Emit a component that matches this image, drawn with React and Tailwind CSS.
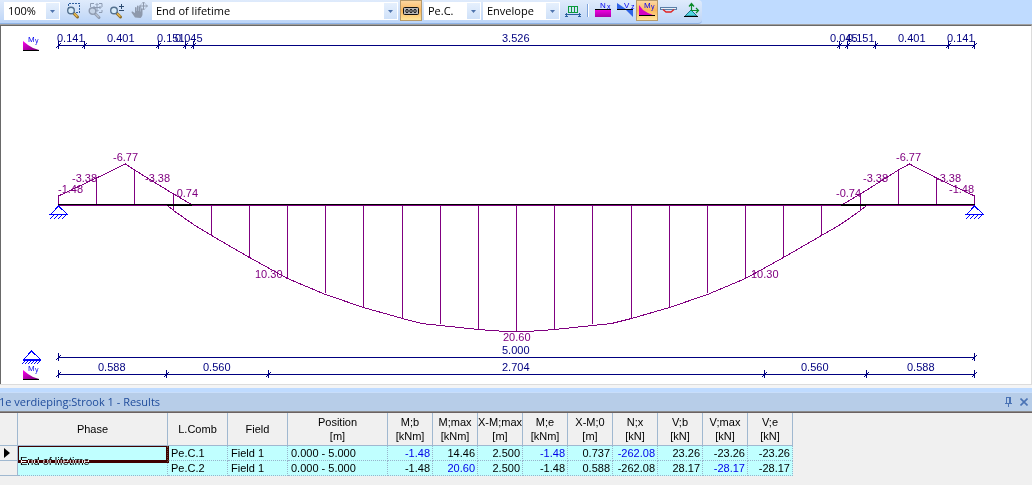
const UI = "font-['Open_Sans','Noto_Sans',sans-serif]";
const GRID = "font-['Liberation_Sans',Arial,sans-serif]";

const BEAM_Y = 205;

const TOP_DIMS = {
  y: 45,
  ticks: [58, 84, 158, 185, 193, 839, 847, 875, 948, 974],
  labels: [
    [57, '0.141'], [107, '0.401'], [157, '0.151'], [175, '0.045'], [502, '3.526'],
    [830, '0.045'], [847, '0.151'], [898, '0.401'], [947, '0.141'],
  ],
};
const TOTAL_DIM = { y: 357, ticks: [58, 974], labels: [[502, '5.000']] };
const BOTTOM_DIMS = {
  y: 374,
  ticks: [58, 166, 268, 764, 866, 974],
  labels: [[98, '0.588'], [203, '0.560'], [502, '2.704'], [801, '0.560'], [907, '0.588']],
};

const HOGGING = [
  '58,205 58,196 96,178 125,164 134,170 173,194 192,205',
  '974,205 974,196 936,178 909,164 898,170 860,194 841,205',
];

const SAGGING = [
  [167, 205], [173, 210], [193, 224], [211, 235], [249, 257], [287, 278], [325, 294],
  [363, 307], [402, 318], [421, 323], [440, 325], [478, 329], [505, 331], [527, 331],
  [554, 329], [592, 325], [611, 323], [631, 318], [669, 307], [707, 294], [745, 278],
  [783, 257], [821, 235], [840, 224], [860, 210], [866, 205],
];

const ORDINATES = [
  [96, 178, 205], [134, 170, 205], [173, 194, 210],
  [211, 205, 235], [249, 205, 257], [287, 205, 278], [325, 205, 293], [363, 205, 307],
  [402, 205, 318], [440, 205, 324], [478, 205, 329], [516, 205, 331], [554, 205, 329],
  [592, 205, 324], [631, 205, 318], [669, 205, 307], [707, 205, 293], [745, 205, 278],
  [783, 205, 257], [821, 205, 235],
  [860, 194, 210], [898, 170, 205], [936, 178, 205],
];

const MOMENTS = [
  [58, 193, '-1.48'], [72, 182, '-3.38'], [113, 161, '-6.77'], [145, 182, '-3.38'],
  [173, 197, '-0.74'], [836, 197, '-0.74'], [863, 182, '-3.38'], [896, 161, '-6.77'],
  [936, 182, '-3.38'], [949, 193, '-1.48'], [255, 278, '10.30'], [751, 278, '10.30'],
  [503, 341, '20.60'],
];

const COLUMNS = [
  ['Phase', '', 'w-[150px]'], ['L.Comb', '', 'w-[60px]'], ['Field', '', 'w-[60px]'],
  ['Position', '[m]', 'w-[100px]'], ['M;b', '[kNm]', 'w-[45px]'], ['M;max', '[kNm]', 'w-[45px]'],
  ['X-M;max', '[m]', 'w-[45px]'], ['M;e', '[kNm]', 'w-[45px]'], ['X-M;0', '[m]', 'w-[45px]'],
  ['N;x', '[kN]', 'w-[45px]'], ['V;b', '[kN]', 'w-[45px]'], ['V;max', '[kN]', 'w-[45px]'],
  ['V;e', '[kN]', 'w-[45px]'],
];

const ROWS = [
  {
    text: ['Pe.C.1', 'Field 1', '0.000 - 5.000'],
    values: ['-1.48', '14.46', '2.500', '-1.48', '0.737', '-262.08', '23.26', '-23.26', '-23.26'],
    extremes: [0, 3, 5],
  },
  {
    text: ['Pe.C.2', 'Field 1', '0.000 - 5.000'],
    values: ['-1.48', '20.60', '2.500', '-1.48', '0.588', '-262.08', '28.17', '-28.17', '-28.17'],
    extremes: [1, 7],
  },
];

function Dropdown({ label, value, width }) {
  return (
    <div className={`grid h-[18px] bg-white ${width}`}>
      <select
        aria-label={label}
        className="col-start-1 row-start-1 h-[18px] w-full appearance-none bg-transparent pr-4 pl-1 text-[11px] leading-[18px] text-black outline-none"
      >
        <option>{value}</option>
      </select>
      <span className="pointer-events-none col-start-1 row-start-1 m-px flex w-[13px] items-center justify-center justify-self-end bg-gradient-to-b from-[#e6f0fd] to-[#cfe1f9]">
        <svg width="5" height="3" viewBox="0 0 5 3" aria-hidden="true">
          <path d="M0 0h5L2.500 3z" fill="#4f74ad" />
        </svg>
      </span>
    </div>
  );
}

function ToolButton({ label, active, children }) {
  return (
    <button
      type="button"
      aria-label={label}
      aria-pressed={active}
      className={`h-[21px] w-[22px] ${active ? 'bg-gradient-to-b from-[#fcd9a5] via-[#fbb85c] to-[#fde9a0] shadow-[inset_0_0_0_1px_#b69a6c]' : ''}`}
    >
      <svg width="22" height="21" viewBox="0 0 22 21" fill="none" aria-hidden="true">
        {children}
      </svg>
    </button>
  );
}

function Lens({ x, y, muted }) {
  return (
    <g>
      <path d={`M${x + 2.5} ${y + 2.5}l4 4`} stroke={muted ? '#8f9bb0' : '#8a6a28'} strokeWidth="3" strokeLinecap="round" />
      <path d={`M${x + 3} ${y + 2.700}l3.400 3.400`} stroke={muted ? '#b4bdcc' : '#e8b84c'} strokeWidth="1.500" />
      <circle cx={x} cy={y} r="3.300" fill={muted ? '#c5d3e6' : '#d7ebfa'} stroke={muted ? '#8f9bb0' : '#54718f'} strokeWidth="1.400" />
    </g>
  );
}

function MoveCross({ x, y, color }) {
  return (
    <path
      d={`M${x - 3.5} ${y}h7M${x} ${y - 3.5}v7M${x - 1.5} ${y - 2.5}l1.500-1.500 1.500 1.500M${x - 1.5} ${y + 2.5}l1.500 1.500 1.500-1.500M${x - 2.5} ${y - 1.5}l-1.500 1.500 1.500 1.500M${x + 2.5} ${y - 1.5}l1.500 1.500-1.500 1.500`}
      stroke={color}
    />
  );
}

function Symbol({ x, y, main, sub }) {
  return (
    <g fill="#0000f0" className="font-['Liberation_Sans',sans-serif]">
      <text x={x} y={y} fontSize="8">{main}</text>
      <text x={x + 7} y={y + 1} fontSize="7">{sub}</text>
    </g>
  );
}

function Toolbar() {
  return (
    <header className="flex h-[25px] shrink-0 border-b border-[#a0a0a0] bg-[#bfdbff]">
      <div className={`flex h-6 items-start gap-0.5 rounded-r border-b border-[#8fb3e6] bg-gradient-to-b from-[#dfebfc] via-[#cfe0f8] to-[#bcd5f8] pl-1 ${UI}`}>
        <div className="pt-0.5"><Dropdown label="Zoom" value="100%" width="w-14" /></div>
        <div className="flex">
          <ToolButton label="Zoom window">
            <path d="M6.500 12V3.500H17.500V12.500H13" stroke="#2f5f9f" strokeDasharray="2 1" shapeRendering="crispEdges" />
            <Lens x={9} y={10.5} />
          </ToolButton>
          <ToolButton label="Zoom all">
            <path d="M6.500 7V3.500H10M15 3.500h3V7M18 10v2.500h-3" stroke="#8d9bb2" />
            <Lens x={8.5} y={11} muted />
            <MoveCross x={13} y={7.5} color="#8d9bb2" />
          </ToolButton>
          <ToolButton label="Zoom in or out">
            <Lens x={8} y={10.5} />
            <path d="M13 6.500h5M15.500 4v5M13 10.500h5" stroke="#2c4a70" shapeRendering="crispEdges" />
          </ToolButton>
          <ToolButton label="Pan">
            <path
              d="M7 17.500 3.700 12.800c-.6-1 .7-1.700 1.500-.9L7 13V7.800c0-1 1.500-1 1.600 0V11h.4V6.300c0-1 1.600-1 1.600 0V11h.4V7c0-1 1.600-1 1.600 0v4.500h.4V9c0-1 1.500-1 1.500 0v5c0 1.800-.8 3-2 4z"
              fill="#8e99ac"
            />
            <MoveCross x={15.5} y={6} color="#8e99ac" />
          </ToolButton>
        </div>
        <div className="pt-0.5"><Dropdown label="Phase" value="End of lifetime" width="w-[246px]" /></div>
        <ToolButton label="Combinations" active>
          <rect x="3.500" y="7.500" width="15" height="7" rx="1" fill="#b9b9b9" stroke="#111" />
          <g stroke="#111">
            <ellipse cx="7" cy="11" rx="1.200" ry="1.700" />
            <ellipse cx="11" cy="11" rx="1.200" ry="1.700" />
            <ellipse cx="15" cy="11" rx="1.200" ry="1.700" />
          </g>
        </ToolButton>
        <div className="pt-0.5"><Dropdown label="Combination" value="Pe.C." width="w-[57px]" /></div>
        <div className="pt-0.5"><Dropdown label="Result type" value="Envelope" width="w-[77px]" /></div>
        <div className="flex">
          <ToolButton label="Loads">
            <g shapeRendering="crispEdges">
              <path d="M6 6.500h10M6.500 6v6M9.500 6v6M12.500 6v6M15.500 6v6M6 12.500h10" stroke="#0a9a3c" />
              <path d="M3 14.500h16M4.500 13v3M17.500 13v3M3 16.500h3M16 16.500h3" stroke="#2a5f9e" />
            </g>
          </ToolButton>
          <div className="mx-[3px] my-1 w-0.5 border-l border-[#7fa4dc] bg-white" />
          <ToolButton label="Normal force">
            <defs>
              <linearGradient id="force" x1="0" y1="0" x2="0" y2="1">
                <stop offset="0" stopColor="#f000e0" />
                <stop offset="1" stopColor="#a800a8" />
              </linearGradient>
            </defs>
            <path d="M3 10h16v7H3z" fill="url(#force)" />
            <path d="M3 9.500h16" stroke="#000" shapeRendering="crispEdges" />
            <Symbol x={8} y={8} main="N" sub="x" />
          </ToolButton>
          <ToolButton label="Shear force">
            <path d="M3 3l9 6H3zM11 9h8v8z" fill="#2f63e6" />
            <path d="M3 9.500h16" stroke="#000" shapeRendering="crispEdges" />
            <Symbol x={10} y={8} main="V" sub="z" />
          </ToolButton>
          <ToolButton label="Bending moment" active>
            <path d="M3 5l4 5 5 3 6 2.500H3z" fill="#d400c4" />
            <path d="M3 15.500h16" stroke="#000" shapeRendering="crispEdges" />
            <Symbol x={8} y={8} main="M" sub="y" />
          </ToolButton>
          <ToolButton label="Deflection">
            <path d="M2.500 7.500h16v2h-16z" fill="#e8f0fa" stroke="#5a7fa8" shapeRendering="crispEdges" />
            <path d="M5 9.500l3 2.500h5l3-2.500" stroke="#e02020" strokeWidth="1.300" />
          </ToolButton>
          <ToolButton label="Reactions">
            <path d="M11 10l6 6H5z" fill="#4fd6e0" stroke="#1d6f86" />
            <path d="M4 16.500h14" stroke="#000" shapeRendering="crispEdges" />
            <path d="M11.500 11V4M9 6.500l2.500-3 2.500 3M11 10.500h7M16 8l2.500 2.500L16 13" stroke="#0a8a2a" strokeWidth="1.200" />
          </ToolButton>
        </div>
      </div>
    </header>
  );
}

function DimensionLine({ y, ticks, labels }) {
  const first = ticks[0];
  const last = ticks[ticks.length - 1];
  return (
    <g>
      <g stroke="#000080" fill="none" shapeRendering="crispEdges">
        <path d={`M${first} ${y + 0.5}H${last}`} />
        {ticks.map((x) => (
          <path key={x} d={`M${x + 0.5} ${y - 4}v8M${x - 2} ${y + 3}l5-5`} />
        ))}
      </g>
      <g fill="#000080" fontSize="11">
        {labels.map(([x, text]) => (
          <text key={x} x={x} y={y - 3}>{text}</text>
        ))}
      </g>
    </g>
  );
}

function Support({ x, y }) {
  return (
    <path
      d={`M${x + 0.5} ${y}l-8 8.500h17zM${x - 9} ${y + 8.5}h19M${x - 4} ${y + 9}l-4 4M${x} ${y + 9}l-4 4M${x + 4} ${y + 9}l-4 4M${x + 8} ${y + 9}l-4 4`}
      fill="none"
      stroke="#0000ff"
      shapeRendering="crispEdges"
    />
  );
}

function SupportLegend({ x, y }) {
  const hatches = [-6, -3, 0, 3, 6, 9];
  return (
    <g fill="none" stroke="#0000ff" shapeRendering="crispEdges">
      <path d={`M${x + 0.5} ${y}l-8 8.500h17zM${x - 8} ${y + 9.5}h18`} />
      {hatches.map((dx) => (
        <path key={dx} d={`M${x + dx} ${y + 10}l-3 3`} />
      ))}
    </g>
  );
}

function MomentLegend({ y }) {
  return (
    <g>
      <path d={`M23 ${y}l5 4 5 3 6 2H23z`} fill="url(#ramp)" />
      <path d={`M23 ${y + 9.5}h16`} stroke="#000" shapeRendering="crispEdges" />
      <Symbol x={28} y={y + 1} main="M" sub="y" />
    </g>
  );
}

function MomentDiagram() {
  return (
    <main className="border-t border-r border-l border-t-[#696969] border-r-[#dcdcdc] border-l-[#696969] bg-white">
      <svg
        viewBox="1 26 1030 358"
        className="block h-auto w-full font-['Liberation_Sans',Arial,sans-serif]"
        role="img"
        aria-label="Bending moment diagram"
      >
        <defs>
          <linearGradient id="ramp" x1="0" y1="0" x2="1" y2="1">
            <stop offset="0" stopColor="#ff00f0" />
            <stop offset="1" stopColor="#700070" />
          </linearGradient>
        </defs>
        <MomentLegend y={41} />
        <DimensionLine {...TOP_DIMS} />

        <g fill="none" stroke="#800080" shapeRendering="crispEdges">
          {HOGGING.map((points) => (
            <polyline key={points} points={points} transform="translate(0.500 0)" />
          ))}
          <polyline points={SAGGING.map((p) => p.join(',')).join(' ')} transform="translate(0.500 0.500)" />
          {ORDINATES.map(([x, from, to]) => (
            <path key={x} d={`M${x + 0.5} ${from}V${to}`} />
          ))}
          <path d={`M58 ${BEAM_Y + 0.5}H975`} />
        </g>
        <g stroke="#000" shapeRendering="crispEdges">
          <path d={`M58 ${BEAM_Y - 0.5}H975`} />
          <path d={`M167 ${BEAM_Y + 0.5}H192M841 ${BEAM_Y + 0.5}H866`} />
        </g>
        <g fill="#800080" fontSize="11">
          {MOMENTS.map(([x, y, text]) => (
            <text key={x} x={x} y={y}>{text}</text>
          ))}
        </g>
        <Support x={58} y={206} />
        <Support x={974} y={206} />

        <SupportLegend x={31} y={351} />
        <DimensionLine {...TOTAL_DIM} />
        <MomentLegend y={370} />
        <DimensionLine {...BOTTOM_DIMS} />
      </svg>
    </main>
  );
}

function PanelTitle() {
  return (
    <div className={`flex h-5 items-center border-t border-b border-t-[#c9defa] border-b-[#8a8a8a] bg-[#b7cde8] text-[#1e4b9b] ${UI}`}>
      <h2 className="-ml-px flex-1 text-[11px] leading-[18px]">1e verdieping:Strook 1 - Results</h2>
      <button type="button" aria-label="Auto hide" className="flex h-4 w-4 items-center justify-center">
        <svg width="9" height="10" viewBox="0 0 9 10" fill="none" stroke="#4a73b5" shapeRendering="crispEdges">
          <path d="M2 .5h5M2.500 0v6M5.500 0v6M6.500 0v6M1 6.500h7M4.500 7v3" />
        </svg>
      </button>
      <button type="button" aria-label="Close" className="flex h-4 w-4 items-center justify-center">
        <svg width="8" height="8" viewBox="0 0 8 8" fill="none" stroke="#4a73b5" strokeWidth="1.600">
          <path d="M.5.5l7 7M7.500.5l-7 7" />
        </svg>
      </button>
    </div>
  );
}

const CELL = 'h-[15px] border-r border-b border-dotted border-[#98b4cc] bg-[#c0ffff] p-0 pt-px leading-[13px]';
const HEAD = 'h-[33px] border-r border-b border-[#a0b8d0] bg-[#f0f0f0] p-0 font-normal leading-[14px]';

function ResultsTable() {
  return (
    <div className="flex-1 overflow-hidden border-t border-[#6b6262] bg-[#f0f0f0]">
      <table className={`w-[793px] table-fixed border-separate border-spacing-0 text-[11px] text-black ${GRID}`}>
        <thead>
          <tr>
            <th className={`${HEAD} w-[18px]`} aria-label="Current row" />
            {COLUMNS.map(([name, unit, width]) => (
              <th key={name} scope="col" className={`${HEAD} ${width} whitespace-nowrap`}>
                {name}
                {unit && <span className="block">{unit}</span>}
              </th>
            ))}
          </tr>
        </thead>
        <tbody>
          {ROWS.map((row, r) => (
            <tr key={row.text[0]}>
              <td className="h-[15px] border-r border-b border-[#a0b8d0] bg-[#f0f0f0] p-0">
                {r === 0 && (
                  <svg width="6" height="10" viewBox="0 0 6 10" className="ml-1 block" aria-hidden="true">
                    <path d="M0 0l6 5-6 5z" fill="#000" />
                  </svg>
                )}
              </td>
              {r === 0 && (
                <td rowSpan={2} className={`${CELL} relative pl-0.5`}>
                  End of lifetime
                  <span className="absolute top-0 -right-0.5 left-0 h-[17px] border-t border-r-[3px] border-b-[3px] border-l border-white mix-blend-difference" />
                </td>
              )}
              {row.text.map((text) => (
                <td key={text} className={`${CELL} pl-[3px] whitespace-nowrap`}>{text}</td>
              ))}
              {row.values.map((value, i) => (
                <td
                  key={i}
                  className={`${CELL} pr-0.5 text-right whitespace-nowrap ${row.extremes.includes(i) ? 'text-[#0000e8]' : ''}`}
                >
                  {value}
                </td>
              ))}
            </tr>
          ))}
        </tbody>
      </table>
    </div>
  );
}

export default function App() {
  return (
    <div className="flex min-h-screen flex-col bg-[#f0f0f0]">
      <Toolbar />
      <MomentDiagram />
      <div className="h-1 border-t border-[#dcdcdc] bg-[#f4f4f4]" />
      <div className="h-1 bg-[#bfdbff]" />
      <PanelTitle />
      <ResultsTable />
    </div>
  );
}
